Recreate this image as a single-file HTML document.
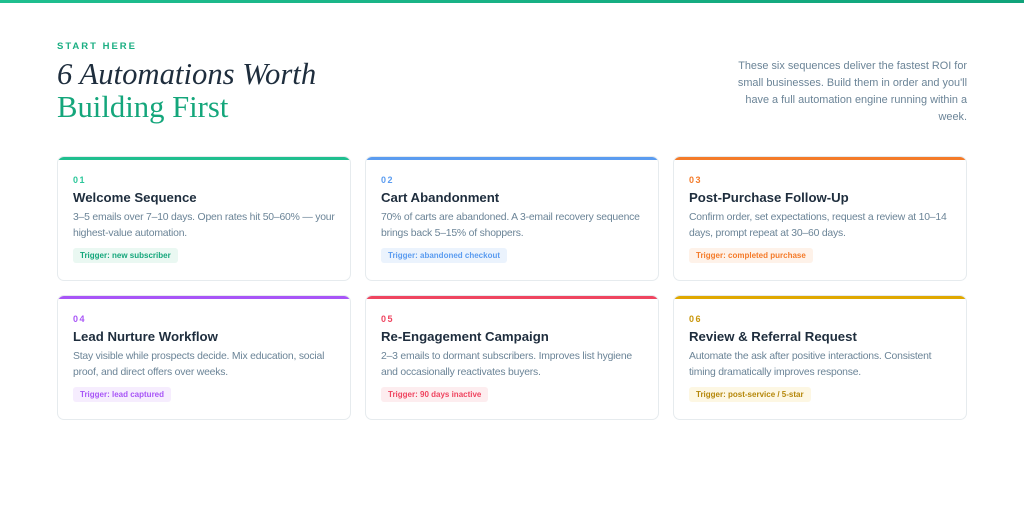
<!DOCTYPE html><html><head><style>
*{margin:0;padding:0;box-sizing:border-box}
body{width:1024px;height:529px;background:#fff;font-family:"Liberation Sans",sans-serif;position:relative;overflow:hidden}
.bar{position:absolute;top:0;left:0;right:0;height:3px;background:linear-gradient(90deg,#1fbf8f,#10a37a)}
.eye{position:absolute;left:57px;top:41px;font-size:9.5px;font-weight:bold;letter-spacing:2px;color:#1aae82}
h1{position:absolute;left:57px;top:58px;font-family:"Liberation Serif",serif;font-weight:normal;font-size:30.7px;line-height:33px;color:#1e2d3d}
h1 i{font-style:italic}
h1 span{color:#14a67b}
.intro{position:absolute;right:57px;top:58px;width:234px;text-align:right;font-size:10.9px;line-height:17px;color:#6b8497}
.card{position:absolute;width:294px;height:125px;border:1px solid #e6ebee;border-radius:7px;padding:18px 14px 0 15px;overflow:hidden}
.card:before{content:"";position:absolute;left:0;right:0;top:0;height:3px;background:var(--c)}
.n{font-size:9px;font-weight:bold;letter-spacing:1.5px;color:var(--c)}
.t{font-size:13.2px;font-weight:bold;color:#1e2d3d;margin-top:5px}
.d{font-size:10.4px;letter-spacing:-0.2px;line-height:16px;color:#6b8497;margin-top:5px}
.g{display:inline-block;margin-top:6px;font-size:8px;font-weight:bold;padding:3px 7px;border-radius:3px;color:var(--c);background:var(--b)}
</style></head><body>
<div class="bar"></div>
<div class="eye">START HERE</div>
<h1><i>6 Automations Worth</i><br><span>Building First</span></h1>
<div class="intro">These six sequences deliver the fastest ROI for small businesses. Build them in order and you'll have a full automation engine running within a week.</div>
<div class="card" style="left:57px;top:156px;--c:#1fbf8f;--b:#eaf8f2"><div class="n" style="color:#2cc79a">01</div><div class="t">Welcome Sequence</div><div class="d">3–5 emails over 7–10 days. Open rates hit 50–60% — your highest-value automation.</div><div class="g" style="color:#14a67b">Trigger: new subscriber</div></div>
<div class="card" style="left:365px;top:156px;--c:#5b9cf0;--b:#ebf3fd"><div class="n">02</div><div class="t">Cart Abandonment</div><div class="d">70% of carts are abandoned. A 3-email recovery sequence brings back 5–15% of shoppers.</div><div class="g">Trigger: abandoned checkout</div></div>
<div class="card" style="left:673px;top:156px;--c:#f47b2a;--b:#fef2e9"><div class="n">03</div><div class="t">Post-Purchase Follow-Up</div><div class="d">Confirm order, set expectations, request a review at 10–14 days, prompt repeat at 30–60 days.</div><div class="g">Trigger: completed purchase</div></div>
<div class="card" style="left:57px;top:295px;--c:#a855f7;--b:#f6edfe"><div class="n">04</div><div class="t">Lead Nurture Workflow</div><div class="d">Stay visible while prospects decide. Mix education, social proof, and direct offers over weeks.</div><div class="g">Trigger: lead captured</div></div>
<div class="card" style="left:365px;top:295px;--c:#ef4560;--b:#fdedef"><div class="n">05</div><div class="t">Re-Engagement Campaign</div><div class="d">2–3 emails to dormant subscribers. Improves list hygiene and occasionally reactivates buyers.</div><div class="g">Trigger: 90 days inactive</div></div>
<div class="card" style="left:673px;top:295px;--c:#e0a800;--b:#fdf7e3"><div class="n" style="color:#c9960a">06</div><div class="t">Review &amp; Referral Request</div><div class="d">Automate the ask after positive interactions. Consistent timing dramatically improves response.</div><div class="g" style="color:#b5870a">Trigger: post-service / 5-star</div></div>
</body></html>
